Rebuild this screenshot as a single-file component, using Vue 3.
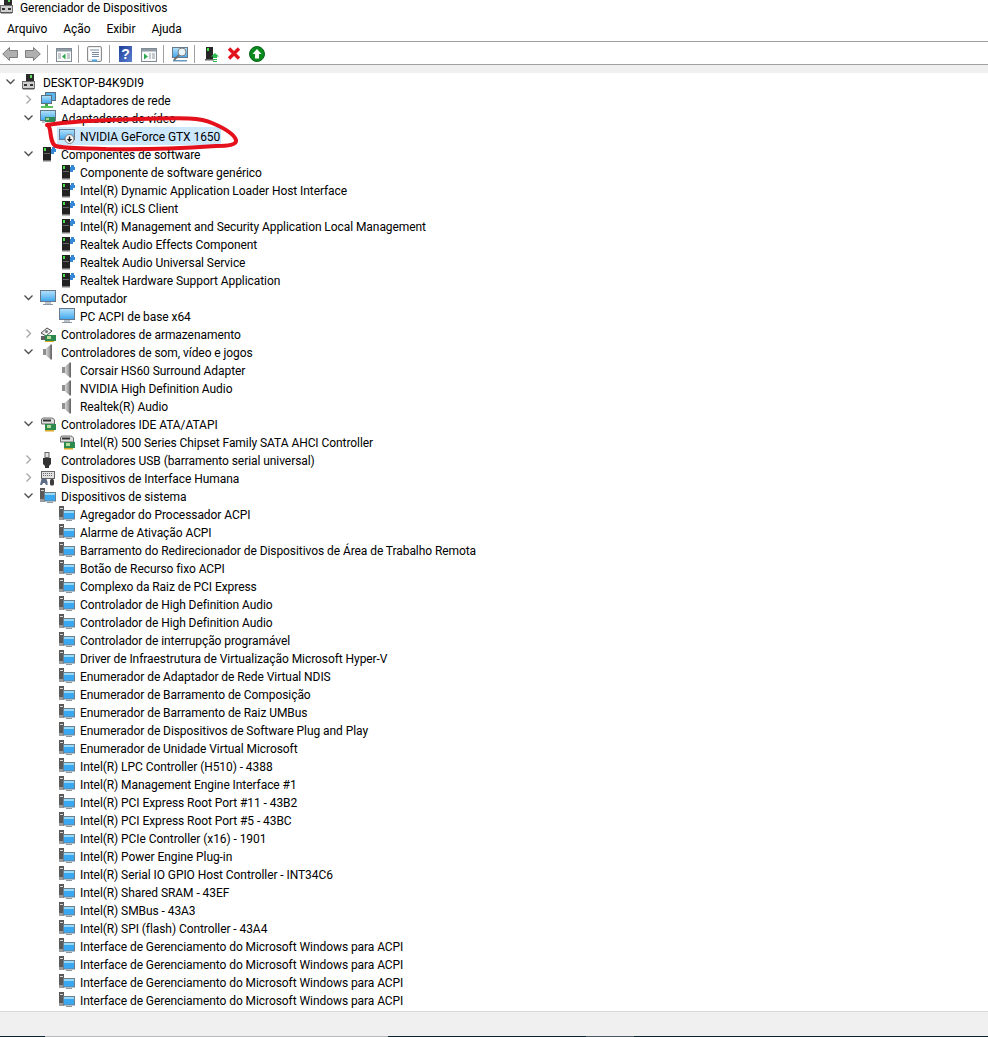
<script setup>
const generic = ['Componente de software genérico', 'Intel(R) Dynamic Application Loader Host Interface', 'Intel(R) iCLS Client', 'Intel(R) Management and Security Application Local Management', 'Realtek Audio Effects Component', 'Realtek Audio Universal Service', 'Realtek Hardware Support Application']
const system = ['Agregador do Processador ACPI', 'Alarme de Ativação ACPI', 'Barramento do Redirecionador de Dispositivos de Área de Trabalho Remota', 'Botão de Recurso fixo ACPI', 'Complexo da Raiz de PCI Express', 'Controlador de High Definition Audio', 'Controlador de High Definition Audio', 'Controlador de interrupção programável', 'Driver de Infraestrutura de Virtualização Microsoft Hyper-V', 'Enumerador de Adaptador de Rede Virtual NDIS', 'Enumerador de Barramento de Composição', 'Enumerador de Barramento de Raiz UMBus', 'Enumerador de Dispositivos de Software Plug and Play', 'Enumerador de Unidade Virtual Microsoft', 'Intel(R) LPC Controller (H510) - 4388', 'Intel(R) Management Engine Interface #1', 'Intel(R) PCI Express Root Port #11 - 43B2', 'Intel(R) PCI Express Root Port #5 - 43BC', 'Intel(R) PCIe Controller (x16) - 1901', 'Intel(R) Power Engine Plug-in', 'Intel(R) Serial IO GPIO Host Controller - INT34C6', 'Intel(R) Shared SRAM - 43EF', 'Intel(R) SMBus - 43A3', 'Intel(R) SPI (flash) Controller - 43A4', 'Interface de Gerenciamento do Microsoft Windows para ACPI', 'Interface de Gerenciamento do Microsoft Windows para ACPI', 'Interface de Gerenciamento do Microsoft Windows para ACPI', 'Interface de Gerenciamento do Microsoft Windows para ACPI']

const group = (label, icon, open, kids = [], kidIcon = icon) => [
  { label, icon, level: 1, arrow: open ? 'open' : 'closed' },
  ...kids.map((k) => ({ label: k, icon: kidIcon, level: 2 })),
]

const rows = [
  { label: 'DESKTOP-B4K9DI9', icon: 'host', level: 0, arrow: 'open' },
  ...group('Adaptadores de rede', 'net', false),
  ...group('Adaptadores de vídeo', 'video', true),
  { label: 'NVIDIA GeForce GTX 1650', icon: 'gpu', level: 2, selected: true },
  ...group('Componentes de software', 'soft', true, generic),
  ...group('Computador', 'monitor', true, ['PC ACPI de base x64']),
  ...group('Controladores de armazenamento', 'storage', false),
  ...group('Controladores de som, vídeo e jogos', 'sound', true, ['Corsair HS60 Surround Adapter', 'NVIDIA High Definition Audio', 'Realtek(R) Audio']),
  ...group('Controladores IDE ATA/ATAPI', 'ide', true, ['Intel(R) 500 Series Chipset Family SATA AHCI Controller']),
  ...group('Controladores USB (barramento serial universal)', 'usb', false),
  ...group('Dispositivos de Interface Humana', 'hid', false),
  ...group('Dispositivos de sistema', 'sys', true, system),
]

const menus = ['Arquivo', 'Ação', 'Exibir', 'Ajuda']

// leftover of the desktop taskbar on the last pixel row
const taskbar = [
  { w: 45, c: '#0b2530' },
  { w: 343, c: '#b5b9bb' },
  { w: 198, c: '#0b2530' },
  { w: 48, c: '#4a5a62' },
  { w: 354, c: '#0b2530' },
]
</script>

<template>
  <div class="window">
    <svg width="0" height="0" class="defs">
      <defs>
        <linearGradient id="screen" x1="0" y1="0" x2="0" y2="1">
          <stop offset="0" stop-color="#b4e2fa" />
          <stop offset="1" stop-color="#3fa6ee" />
        </linearGradient>
        <linearGradient id="cone" x1="0" y1="0" x2="1" y2="0">
          <stop offset="0" stop-color="#d8d8d8" />
          <stop offset="1" stop-color="#8a8a8a" />
        </linearGradient>
        <linearGradient id="help" x1="0" y1="0" x2="1" y2="1">
          <stop offset="0" stop-color="#1f3f9a" />
          <stop offset="1" stop-color="#5a7fd0" />
        </linearGradient>
        <symbol id="i-host" viewBox="0 0 16 16">
          <rect x="4" y="0" width="8" height="7" fill="#2a2a2a" />
          <rect x="8" y="1" width="2" height="3" fill="#5fdc5f" />
          <rect x="0.500" y="7.500" width="12" height="7" fill="#cfcfcf" stroke="#6f6f6f" />
          <rect x="2" y="10" width="3" height="2" fill="#333" />
          <rect x="8" y="10" width="3" height="2" fill="#333" />
          <rect x="1" y="14" width="11" height="1.500" fill="#555" />
        </symbol>
        <symbol id="i-monitor" viewBox="0 0 16 16">
          <rect x="0.500" y="0.500" width="15" height="11" fill="url(#screen)" stroke="#66788a" />
          <rect x="5" y="12" width="6" height="2" fill="#b9c2c9" />
          <rect x="3" y="14" width="10" height="1" fill="#8b98a3" />
        </symbol>
        <symbol id="i-net" viewBox="0 0 16 16">
          <rect x="5.500" y="0.500" width="10" height="8" fill="#58b4ee" stroke="#61707e" />
          <rect x="1.500" y="3.500" width="10" height="8" fill="url(#screen)" stroke="#61707e" />
          <rect x="5" y="12" width="3" height="2" fill="#3da83d" />
          <rect x="1" y="14" width="12" height="2" fill="#5cc05c" />
        </symbol>
        <symbol id="i-video" viewBox="0 0 16 16">
          <rect x="0.500" y="0.500" width="15" height="10" fill="url(#screen)" stroke="#66788a" />
          <rect x="5" y="7" width="10" height="5" fill="#2e8b57" />
          <rect x="6" y="8" width="3" height="2" fill="#a9d18e" />
          <rect x="2" y="11" width="3" height="2" fill="#b9c2c9" />
        </symbol>
        <symbol id="i-gpu" viewBox="0 0 16 16">
          <rect x="0.500" y="1.500" width="15" height="10" fill="url(#screen)" stroke="#66788a" />
          <circle cx="10.500" cy="11" r="4.500" fill="#f4f4f4" stroke="#7a7a7a" />
          <path d="M9.800 8.500h1.400v2.500h2l-2.700 3-2.700-3h2z" fill="#111" />
        </symbol>
        <symbol id="i-soft" viewBox="0 0 16 16">
          <rect x="3" y="1" width="8" height="13" fill="#222" />
          <rect x="4" y="2" width="2" height="3" fill="#4ade4a" />
          <rect x="4" y="7" width="6" height="1" fill="#666" />
          <rect x="3" y="14" width="8" height="1.500" fill="#777" />
          <path d="M11 3h1V1h3v2h1v3h-2v2h-3z" fill="#3488d6" />
        </symbol>
        <symbol id="i-storage" viewBox="0 0 16 16">
          <path d="M1 7l6-5 5 3-6 5z" fill="#ededed" stroke="#4c4c4c" />
          <circle cx="6.500" cy="5.500" r="1.500" fill="#777" />
          <rect x="5" y="9" width="11" height="6" fill="#2c8a4e" />
          <rect x="7" y="10" width="4" height="3" fill="#b8dc9a" />
          <rect x="1" y="10" width="4" height="4" fill="#5f5f5f" />
          <rect x="5" y="15" width="9" height="1" fill="#d9a826" />
        </symbol>
        <symbol id="i-sound" viewBox="0 0 16 16">
          <rect x="3" y="5" width="3" height="6" fill="#8f8f8f" />
          <path d="M6 4.500l5-4v15l-5-4z" fill="url(#cone)" />
          <rect x="10.500" y="0.500" width="1.500" height="15" fill="#6a6a6a" />
        </symbol>
        <symbol id="i-ide" viewBox="0 0 16 16">
          <path d="M1.500 4q0-2 2-2h8q2 0 3 2v4h-13z" fill="#dcdcdc" stroke="#6a6a6a" />
          <rect x="3" y="3.500" width="8" height="2" fill="#333" />
          <rect x="5" y="8" width="11" height="6" fill="#2c8a4e" />
          <rect x="7" y="9" width="4" height="3" fill="#b8dc9a" />
          <rect x="5" y="14" width="9" height="1.500" fill="#d9a826" />
        </symbol>
        <symbol id="i-usb" viewBox="0 0 16 16">
          <rect x="5" y="0.500" width="4" height="5" fill="#e4e4e4" stroke="#666" />
          <path d="M3 6h8v6l-2 2v2H5v-2l-2-2z" fill="#333" />
        </symbol>
        <symbol id="i-hid" viewBox="0 0 16 16">
          <rect x="1.500" y="1.500" width="13" height="7" fill="#e2e2e2" stroke="#666" />
          <path d="M3 3.500h10M3 5.500h10" stroke="#6a6a6a" stroke-dasharray="1 1" />
          <path d="M0 15l1.500-6h5l1 3v3H6l-1-2H3l-1 2z" fill="#5a6c86" />
          <rect x="10" y="9" width="4" height="6.500" rx="1.500" fill="#3c3c3c" />
        </symbol>
        <symbol id="i-sys" viewBox="0 0 16 16">
          <rect x="0" y="0" width="5" height="14" fill="#5a5a5a" />
          <rect x="1" y="2" width="3" height="1" fill="#d6d6d6" />
          <rect x="0" y="11" width="5" height="3" fill="#9a9a9a" />
          <rect x="4.500" y="4.500" width="11" height="8.500" fill="#3aa8f0" stroke="#6b7f8e" />
          <rect x="5" y="5" width="10" height="2" fill="#9ad8f8" />
          <rect x="7" y="14" width="6" height="1" fill="#8b98a3" />
        </symbol>
      </defs>
    </svg>

    <header class="titlebar">
      <svg class="ico title-ico"><use href="#i-host" /></svg>
      <span>Gerenciador de Dispositivos</span>
    </header>

    <nav class="menubar">
      <span v-for="m in menus" :key="m">{{ m }}</span>
    </nav>

    <div class="toolbar">
      <svg class="tool" viewBox="0 0 16 16"><path d="M0.700 8L7.500 1.500v3H15.500v7H7.500v3z" fill="#b0b0b0" stroke="#7d7d7d" /></svg>
      <svg class="tool" viewBox="0 0 16 16"><path d="M15.300 8L8.500 1.500v3H0.500v7H8.500v3z" fill="#b0b0b0" stroke="#7d7d7d" /></svg>
      <i class="sep" />
      <svg class="tool" viewBox="0 0 16 16"><rect x="0.500" y="2.500" width="15" height="13" fill="#fafafa" stroke="#7f8a94" /><rect x="1" y="3" width="14" height="2.500" fill="#8f9aa3" /><path d="M9.500 7.500v6L6 10.500z" fill="#2fa84f" /><path d="M2 8h3M2 10h3M2 12h3M11 8h3M11 10h3M11 12h3" stroke="#8f9aa3" /></svg>
      <i class="sep" />
      <svg class="tool" viewBox="0 0 16 16"><rect x="0.500" y="0.500" width="14" height="15" rx="1.500" fill="#ececec" stroke="#8c8c8c" /><rect x="2" y="2" width="11" height="11" fill="#fff" /><path d="M3 4h9M5 6.500h7M5 8.500h7M5 10.500h7" stroke="#7a8aa0" /><rect x="5" y="13.500" width="5" height="2" fill="#4aa8e8" /></svg>
      <i class="sep" />
      <svg class="tool" viewBox="0 0 16 16"><rect x="1" y="0" width="13" height="16" fill="url(#help)" /><text x="7.500" y="13" text-anchor="middle" font-size="14" font-weight="700" fill="#fff" font-family="Liberation Sans">?</text></svg>
      <svg class="tool" viewBox="0 0 16 16"><rect x="0.500" y="2.500" width="15" height="13" fill="#fafafa" stroke="#7f8a94" /><rect x="1" y="3" width="14" height="2.500" fill="#8f9aa3" /><path d="M3 7.500v6l4-3z" fill="#2fa84f" /><path d="M8 8h2M8 10h2M8 12h2M11 8h3M11 10h3M11 12h3" stroke="#8f9aa3" /></svg>
      <i class="sep" />
      <svg class="tool" viewBox="0 0 16 16"><rect x="0.500" y="1.500" width="15" height="10" fill="url(#screen)" stroke="#66788a" /><rect x="1" y="14" width="14" height="1.500" fill="#6a99bb" /><circle cx="10" cy="6" r="4" fill="#e6f4fc" stroke="#808080" /><path d="M7 9L2 14" stroke="#707070" stroke-width="1.800" /></svg>
      <i class="sep" />
      <svg class="tool" viewBox="0 0 16 16"><rect x="3" y="1" width="7" height="12" fill="#262626" /><rect x="4" y="2" width="2" height="3" fill="#4ade4a" /><rect x="2" y="13" width="9" height="1.500" fill="#666" /><path d="M12 7l4 3.500h-2V12h-4v-1.500H8z" fill="#2fb84f" /><path d="M10 13.500h4M10 15.500h4" stroke="#2fb84f" /></svg>
      <svg class="tool" viewBox="0 0 16 16"><path d="M3 2.500l10 10M13 2.500l-10 10" stroke="#e2141e" stroke-width="3.400" /></svg>
      <svg class="tool" viewBox="0 0 16 16"><circle cx="8" cy="8" r="7.500" fill="#0a8a1e" stroke="#08641a" stroke-width="1" /><path d="M8 3l4.500 5H10v4.500H6V8H3.500z" fill="#fff" /></svg>
    </div>
    <div class="band" />

    <main class="tree">
      <div v-for="(row, i) in rows" :key="i" class="row" :class="'lv' + row.level">
        <svg v-if="row.arrow" class="arrow" viewBox="0 0 9 9">
          <path v-if="row.arrow === 'open'" d="M0.500 2.500L4.500 6.500L8.500 2.500" fill="none" stroke="#4d4d4d" stroke-width="1.300" />
          <path v-else d="M2.500 0.500L6.500 4.500L2.500 8.500" fill="none" stroke="#a6a6a6" stroke-width="1.300" />
        </svg>
        <div class="item" :class="{ selected: row.selected }">
          <svg class="ico"><use :href="'#i-' + row.icon" /></svg>
          <span class="label">{{ row.label }}</span>
        </div>
      </div>
    </main>

    <footer class="status">
      <div class="taskbar">
        <i v-for="seg in taskbar" :key="seg.w" :style="{ width: seg.w + 'px', background: seg.c }" />
      </div>
    </footer>

    <svg class="scribble" viewBox="0 0 210 50" width="210" height="50">
      <path d="M7 15C30 11 60 10 100 9c40-1 60-2 72 4 12 5 22 11 24 17 1 5-8 6-20 6-30 2-75 4-110 3-18-1-41 0-50-3-4-1-5-8-6-16-1-4-2-6-3-5" fill="none" stroke="#e4101c" stroke-width="4" stroke-linecap="round" />
    </svg>
  </div>
</template>

<style>
html, body {
  margin: 0;
  background: #fff;
}
</style>

<style scoped>
.window {
  position: relative;
  width: 988px;
  height: 1037px;
  overflow: hidden;
  display: flex;
  flex-direction: column;
  background: #fff;
  color: #000;
  font-family: Roboto, "Open Sans", sans-serif;
  font-size: 12px;
  letter-spacing: -0.07px;
}
.defs {
  position: absolute;
}
.ico {
  width: 16px;
  height: 16px;
  flex: none;
}
.titlebar {
  height: 16px;
  line-height: 16px;
  display: flex;
  align-items: flex-start;
  overflow: hidden;
}
.title-ico {
  margin: -2px 4px 0 0;
}
.menubar {
  height: 26px;
  padding-left: 7px;
  display: flex;
  align-items: center;
  gap: 16px;
  border-bottom: 1px solid #a0a0a0;
  box-sizing: border-box;
}
.toolbar {
  height: 23px;
  padding: 2px 0 0 2px;
  display: flex;
  align-items: center;
  border-bottom: 1px solid #a0a0a0;
  box-sizing: border-box;
}
.tool {
  width: 16px;
  height: 16px;
  flex: none;
}
.tool + .tool {
  margin-left: 7px;
}
.sep {
  width: 1px;
  height: 18px;
  background: #a0a0a0;
  margin: 0 8px 0 6px;
}
.band {
  height: 8px;
  background: #f0f0f0;
}
.tree {
  flex: 1;
  min-height: 0;
}
.row {
  position: relative;
  height: 18px;
  display: flex;
  align-items: center;
  white-space: nowrap;
}
.lv0 {
  padding-left: 22px;
}
.lv1 {
  padding-left: 40px;
}
.lv2 {
  padding-left: 59px;
}
.arrow {
  position: absolute;
  width: 9px;
  height: 9px;
  top: 4px;
  margin-left: -16px;
}
.item {
  display: flex;
  align-items: center;
  gap: 5px;
  height: 18px;
}
.label {
  line-height: 16px;
  margin-top: 2px;
}
.selected {
  background: #cce8ff;
  margin-left: -2px;
  padding: 0 1px 0 2px;
}
.status {
  height: 26px;
  background: #f0f0f0;
  border-top: 1px solid #d9d9d9;
  box-sizing: border-box;
  display: flex;
  flex-direction: column;
  justify-content: flex-end;
}
.taskbar {
  display: flex;
  height: 1px;
}
.taskbar i {
  display: block;
  height: 1px;
}
.scribble {
  position: absolute;
  left: 40px;
  top: 110px;
}
</style>
